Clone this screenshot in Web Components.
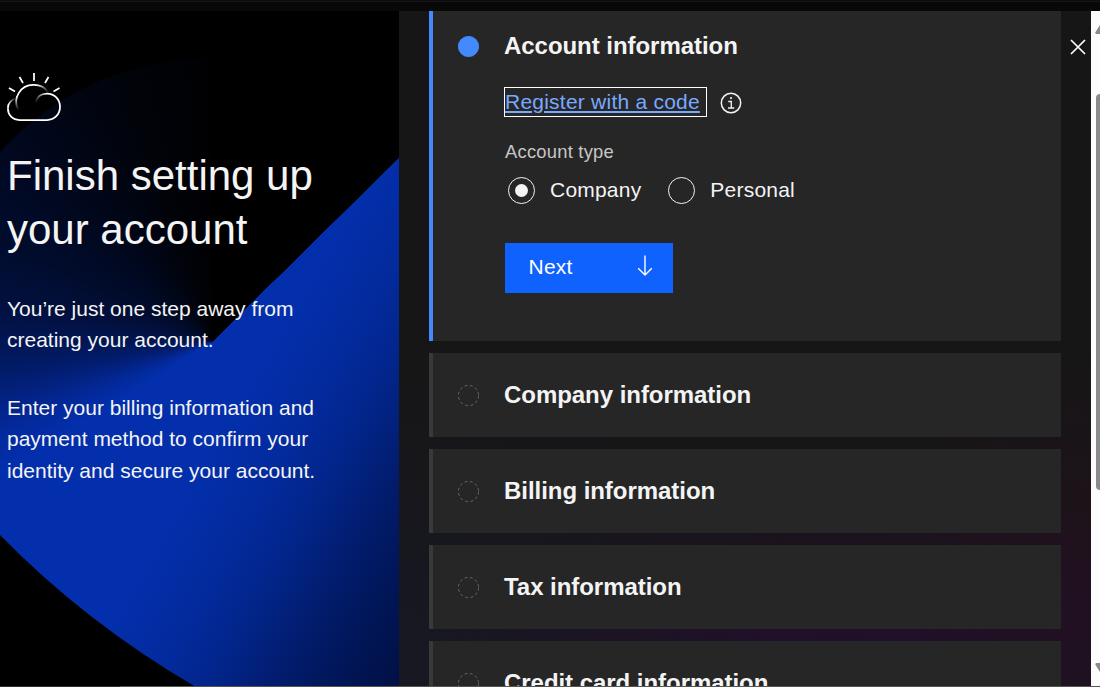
<!DOCTYPE html>
<html lang="en">
<head>
<meta charset="utf-8">
<title>Finish setting up your account</title>
<style>
html,body{margin:0;height:100%;background:#000;overflow:hidden}
body{font-family:"Liberation Sans",Arial,sans-serif;color:#f4f4f4}
</style>
</head>
<body>
<setup-page></setup-page>
<script>
const define = (name, html) => {
  const t = document.createElement('template');
  t.innerHTML = html;
  customElements.define(name, class extends HTMLElement {
    constructor() {
      super();
      this.attachShadow({ mode: 'open' }).append(t.content.cloneNode(true));
    }
  });
};

define('weather-icon', `
<style>:host{display:block;width:56px;height:52px}svg{display:block}</style>
<svg width="56" height="52" viewBox="0 0 56 52" fill="none" stroke="#fff" stroke-width="1.75">
  <defs>
    <linearGradient id="a" gradientUnits="userSpaceOnUse" x1="10" y1="38" x2="12" y2="25"><stop offset="0" stop-color="#fff" stop-opacity="0"/><stop offset="1" stop-color="#fff"/></linearGradient>
    <linearGradient id="b" gradientUnits="userSpaceOnUse" x1="29" y1="14" x2="42" y2="20"><stop offset="0" stop-color="#fff"/><stop offset="1" stop-color="#fff" stop-opacity="0"/></linearGradient>
    <linearGradient id="c" gradientUnits="userSpaceOnUse" x1="28" y1="30" x2="40" y2="22"><stop offset="0" stop-color="#fff" stop-opacity="0"/><stop offset="1" stop-color="#fff"/></linearGradient>
    <linearGradient id="d" gradientUnits="userSpaceOnUse" x1="9" y1="26" x2="2" y2="33"><stop offset="0" stop-color="#fff" stop-opacity="0"/><stop offset="1" stop-color="#fff"/></linearGradient>
  </defs>
  <path d="M27 1v8M12.500 5l3.500 6M41.500 5L38 11M2 16l6 3.500M52.500 16l-6 3.500"/>
  <path stroke="url(#a)" d="M11.300 38A17 17 0 0 1 27 12.900"/>
  <path stroke="url(#b)" d="M27 12.900c6 0 11 2.500 14 7"/>
  <path stroke="url(#c)" d="M28.500 31C29.500 25 34 21.500 40 21.500"/>
  <path stroke="url(#d)" d="M10 26C4 27.500.9 31.500.9 36.500"/>
  <path d="M40 21.500c7.500 0 13 5.800 13 13.300S47.500 48 40 48H12.500C5.500 48 .9 43 .9 36.500"/>
</svg>`);

define('intro-panel', `
<style>
:host{display:block;position:relative;overflow:hidden;background:#000;isolation:isolate}
.art{position:absolute;inset:0;z-index:-1;
  clip-path:path("M0 141A284.600 284.600 0 0 1 212 47H399V676H196Q86 612 0 524Z");
  background:
   linear-gradient(120deg,transparent 400px,rgba(0,6,34,.1) 465px,rgba(0,6,34,.25) 520px,rgba(0,6,34,.47) 580px,rgba(0,6,34,.64) 635px,rgba(0,6,34,.78) 700px),
   conic-gradient(from 0deg at 212px 331px,#000 0 45.400deg,#032fac 45.500deg,#032fac 238deg,#032a9d 246deg,#032284 254deg,#021c6c 261deg,#021653 270deg,#02103d 281deg,#010c2d 295deg,#010922 310deg,#010616 325deg,#010309 342deg,#010104 359deg,#000 360deg)}
.body{padding:61px 0 0 7px}
h1{margin:25px 0 0;font-size:42px;line-height:54px;font-weight:400}
p{margin:36px 0 0;font-size:21px;line-height:31.500px}
h1 + p{margin-top:35.700px}
</style>
<div class="art"></div>
<div class="body">
<weather-icon></weather-icon>
<h1>Finish setting up<br>your account</h1>
<p>You’re just one step away from<br>creating your account.</p>
<p>Enter your billing information and<br>payment method to confirm your<br>identity and secure your account.</p>
</div>`);

define('step-card', `
<style>
:host{display:block;box-sizing:border-box;height:84px;background:#262626;border-left:4px solid #393939;padding:26px 0 0 25px}
:host([active]){height:330px;border-left-color:#4589ff;padding-top:19px}
.head{display:flex;align-items:center;height:32px}
svg{display:block;width:22px;height:22px;margin:1px 24px 0 0;flex:none}
circle{fill:none;stroke:#656565;stroke-width:1;stroke-dasharray:3 2.400}
:host([active]) circle{fill:#4589ff;stroke:#4589ff;stroke-dasharray:none}
h2{margin:0;font-size:24px;line-height:32px;font-weight:700;letter-spacing:-.045px}
.content{padding-left:46px}
</style>
<div class="head"><svg viewBox="0 0 22 22"><circle cx="10.500" cy="10.500" r="10.100"/></svg><h2><slot name="title"></slot></h2></div>
<div class="content"><slot></slot></div>`);

define('code-link', `
<style>
:host{display:flex;align-items:center;margin-top:25px;height:30px;font-size:21px;letter-spacing:.23px}
a{box-sizing:border-box;width:203px;height:30px;border:1px solid #fff;line-height:28px;color:#78a9ff;text-decoration:underline;text-decoration-thickness:2px;text-underline-offset:2px;white-space:nowrap}
svg{display:block;margin:1px 0 0 13px}
</style>
<a><slot></slot></a>
<svg width="22" height="22" viewBox="0 0 22 22" fill="none" stroke="#f4f4f4" stroke-width="1.500"><circle cx="11" cy="11" r="9.700"/><path d="M8.300 9.500h3v6.300M8 16h6.200" stroke-width="1.300"/><circle cx="11" cy="6.100" r="1.050" fill="#f4f4f4" stroke="none"/></svg>`);

define('radio-option', `
<style>
:host{display:flex;align-items:center;font-size:21px;line-height:28px;letter-spacing:.21px}
i{box-sizing:border-box;width:27px;height:27px;border:1.300px solid #f4f4f4;border-radius:50%;margin-right:15px;display:grid;place-items:center}
:host([checked]) i::before{content:"";width:13px;height:13px;border-radius:50%;background:#f4f4f4}
</style><i></i><span><slot></slot></span>`);

define('radio-group', `
<style>
:host{display:block;margin-top:23px}
.label{font-size:18.375px;line-height:24px;letter-spacing:.24px;color:#c6c6c6;padding-left:1px}
.row{display:flex;gap:27px;margin:12px 0 0 4px}
</style>
<div class="label"><slot name="label"></slot></div><div class="row"><slot></slot></div>`);

define('next-button', `
<style>
:host{display:flex;box-sizing:border-box;width:168px;height:50px;margin:39px 0 0 1px;padding:0 19px 2px 23.600px;justify-content:space-between;align-items:center;background:#0f62fe;color:#fff;font-size:21px;letter-spacing:.21px}
svg{display:block;margin-top:-2px}
</style>
<slot></slot>
<svg width="18" height="22" viewBox="0 0 18 22" fill="none" stroke="#fff" stroke-width="1.400"><path d="M9 .500v19.500M2.200 13.300L9 20.100l6.800-6.800"/></svg>`);

define('close-icon', `
<style>:host{display:block}svg{display:block}</style>
<svg width="16" height="16" viewBox="0 0 16 16" stroke="#fff" stroke-width="1.700"><path d="M1 1l14 14M15 1L1 15"/></svg>`);

define('page-scrollbar', `
<style>
:host{display:flex;flex-direction:column;align-items:flex-end;width:9px;background:#fcfcfc}
svg,.thumb{display:block;flex:none}
.thumb{width:4px;height:396px;margin:60px 0 173px;background:#8b8b8b;border-radius:4px 0 0 4px}
.up{margin-top:14px}
</style>
<svg class="up" width="5" height="9" viewBox="0 0 5 9"><path fill="#8b8b8b" d="M5 0L.4 7.200Q0 9 1.500 9H5z"/></svg>
<div class="thumb"></div>
<svg width="5" height="9" viewBox="0 0 5 9"><path fill="#8b8b8b" d="M5 9L.4 1.800Q0 0 1.500 0H5z"/></svg>`);

define('setup-page', `
<style>
:host{display:grid;grid-template:11px 675px 1px / 399px 692px 9px;width:1100px;height:687px}
.top{grid-column:1/-1;background:linear-gradient(#0d0d0d 0 1px,#171717 1px 2px,#080808 2px)}
.main{display:flex;min-height:0;overflow:hidden;
 background:radial-gradient(ellipse 400px 180px at 440px 640px,rgba(42,10,58,.6),transparent),
  radial-gradient(ellipse 200px 240px at 672px 570px,rgba(44,12,34,.42),transparent),
  radial-gradient(ellipse 420px 350px at 0 675px,rgba(25,26,50,.48),transparent),#161616}
.steps{display:flex;flex-direction:column;gap:12px;width:632px;margin-left:30px}
step-card{flex:none}
close-icon{margin:28px 0 0 9px}
.bottom{grid-column:1/-1;background:linear-gradient(90deg,#303030 120px,#555 120px)}
</style>
<div class="top"></div>
<intro-panel></intro-panel>
<div class="main">
 <div class="steps">
  <step-card active><span slot="title">Account information</span>
   <code-link>Register with a code</code-link>
   <radio-group><span slot="label">Account type</span><radio-option checked>Company</radio-option><radio-option>Personal</radio-option></radio-group>
   <next-button>Next</next-button>
  </step-card>
  <step-card><span slot="title">Company information</span></step-card>
  <step-card><span slot="title">Billing information</span></step-card>
  <step-card><span slot="title">Tax information</span></step-card>
  <step-card><span slot="title">Credit card information</span></step-card>
 </div>
 <close-icon></close-icon>
</div>
<page-scrollbar></page-scrollbar>
<div class="bottom"></div>`);
</script>
</body>
</html>
